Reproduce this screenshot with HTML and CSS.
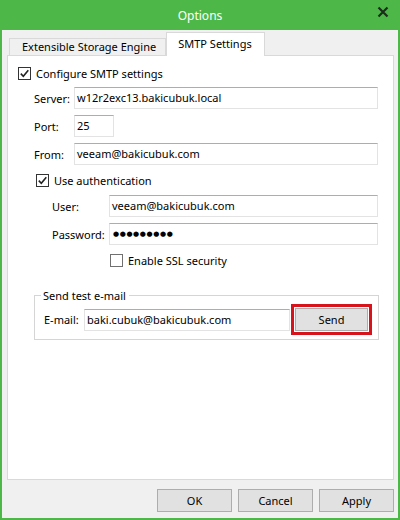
FILE: index.html
```html
<!DOCTYPE html>
<html>
<head>
<meta charset="utf-8">
<link rel="stylesheet" href="styles.css">
</head>
<body>
<div class="window">
  <div class="titlebar">
    <span class="title">Options</span>
    <span class="close"><svg width="12" height="12" viewBox="0 0 12 12"><path d="M1.5 1.5 L10.5 10.5 M10.5 1.5 L1.5 10.5" stroke="#1c2e1b" stroke-width="2.2" fill="none"/></svg></span>
  </div>
  <div class="client">
    <div class="tabs">
      <div class="tab">Extensible Storage Engine</div>
      <div class="tab active">SMTP Settings</div>
    </div>
    <div class="panel">
      <div class="row cfg">
        <span class="cb checked"><svg width="11" height="11" viewBox="0 0 11 11"><path d="M1.8 5.6 L4.3 8.2 L9.3 2.2" stroke="#222" stroke-width="1.6" fill="none"/></svg></span>
        <span class="cblabel">Configure SMTP settings</span>
      </div>
      <div class="grid server-grid">
        <span class="lbl">Server:</span>
        <div class="field">w12r2exc13.bakicubuk.local</div>
        <span class="lbl">Port:</span>
        <div class="field port">25</div>
        <span class="lbl">From:</span>
        <div class="field">veeam@bakicubuk.com</div>
      </div>
      <div class="row auth">
        <span class="cb checked"><svg width="11" height="11" viewBox="0 0 11 11"><path d="M1.8 5.6 L4.3 8.2 L9.3 2.2" stroke="#222" stroke-width="1.6" fill="none"/></svg></span>
        <span class="cblabel">Use authentication</span>
      </div>
      <div class="grid user-grid">
        <span class="lbl">User:</span>
        <div class="field">veeam@bakicubuk.com</div>
        <span class="lbl">Password:</span>
        <div class="field pass">●●●●●●●●●</div>
      </div>
      <div class="row ssl">
        <span class="cb"></span>
        <span class="cblabel">Enable SSL security</span>
      </div>
      <fieldset class="group">
        <legend>Send test e-mail</legend>
        <div class="mailrow">
          <span class="lbl">E-mail:</span>
          <div class="field mail">baki.cubuk@bakicubuk.com</div>
          <div class="highlight"><div class="btn send">Send</div></div>
        </div>
      </fieldset>
    </div>
    <div class="footer">
      <div class="btn">OK</div>
      <div class="btn">Cancel</div>
      <div class="btn">Apply</div>
    </div>
  </div>
</div>
</body>
</html>
```

FILE: styles.css
```css
* { box-sizing: border-box; }
html, body { margin: 0; padding: 0; }
body {
  width: 400px;
  height: 520px;
  font-family: "Noto Sans", "Open Sans", sans-serif;
  font-size: 11px;
  color: #000;
  background: #4db848;
}
.window {
  width: 400px;
  height: 520px;
  background: #4db848;
  padding: 0 2px 2px 2px;
  display: flex;
  flex-direction: column;
}
.titlebar {
  height: 30px;
  display: flex;
  align-items: center;
  justify-content: center;
  position: relative;
  color: #fff;
}
.title {
  font-size: 12px;
  padding-top: 1px;
}
.close {
  position: absolute;
  right: 9px;
  top: 6px;
  width: 12px;
  height: 12px;
  display: flex;
}
.client {
  flex: 1;
  background: #f0f0f0;
  padding: 0 4px 0 5px;
  display: flex;
  flex-direction: column;
}
.tabs {
  height: 25px;
  display: flex;
  align-items: flex-end;
  padding-left: 2px;
}
.tab {
  height: 17px;
  border: 1px solid #d9d9d9;
  border-bottom: none;
  background: #f0f0f0;
  padding: 0 9px 0 12px;
  line-height: 15px;
  white-space: nowrap;
}
.tab.active {
  position: relative;
  z-index: 1;
  height: 24px;
  margin-bottom: -1px;
  background: #fff;
  padding: 0 12px 0 11px;
  line-height: 22px;
}
.panel {
  height: 425px;
  background: #fff;
  border: 1px solid #d9d9d9;
  padding: 6px 0 0 10px;
}
.row {
  height: 22px;
  display: flex;
  align-items: center;
}
.cb {
  width: 13px;
  height: 13px;
  border: 1px solid #333;
  background: #fff;
  display: flex;
  align-items: center;
  justify-content: center;
  flex: none;
}
.ssl .cb { border-color: #707070; }
.cblabel {
  margin-left: 5px;
  white-space: nowrap;
}
.grid {
  display: grid;
  row-gap: 6px;
  align-items: center;
}
.server-grid {
  margin-top: 3px;
  margin-left: 16px;
  grid-template-columns: 40px 304px;
}
.field {
  height: 22px;
  border: 1px solid #e3e3e3;
  border-top-color: #abadb3;
  background: #fff;
  padding: 0 0 0 2px;
  line-height: 20px;
  white-space: nowrap;
  overflow: hidden;
}
.field.port { width: 40px; }
.auth {
  margin-top: 4px;
  margin-left: 18px;
}
.user-grid {
  margin-top: 4px;
  margin-left: 34px;
  grid-template-columns: 57px 269px;
}
.pass {
  font-family: "DejaVu Sans", sans-serif;
  font-size: 7px;
  letter-spacing: 0.6px;
  padding-left: 3px;
}
.ssl {
  margin-top: 4px;
  margin-left: 92px;
}
.group {
  margin: 17px 0 0 16px;
  width: 345px;
  border: 1px solid #d5d5d5;
  padding: 0 6px 3px 6px;
}
.group legend {
  padding: 0 3px 0 2px;
  line-height: 15px;
}
.mailrow {
  display: flex;
  align-items: center;
  height: 33px;
}
.mailrow .lbl {
  margin-left: 3px;
  width: 40px;
}
.field.mail {
  width: 206px;
  margin-right: 1px;
}
.highlight {
  border: 3px solid #d7141c;
  padding: 1px;
  display: flex;
}
.btn {
  width: 75px;
  height: 23px;
  border: 1px solid #adadad;
  background: #e1e1e1;
  display: flex;
  align-items: center;
  justify-content: center;
  padding-bottom: 1px;
}
.btn.send { width: 73px; }
.footer {
  display: flex;
  justify-content: flex-end;
  gap: 6px;
  padding-top: 9px;
}
```
